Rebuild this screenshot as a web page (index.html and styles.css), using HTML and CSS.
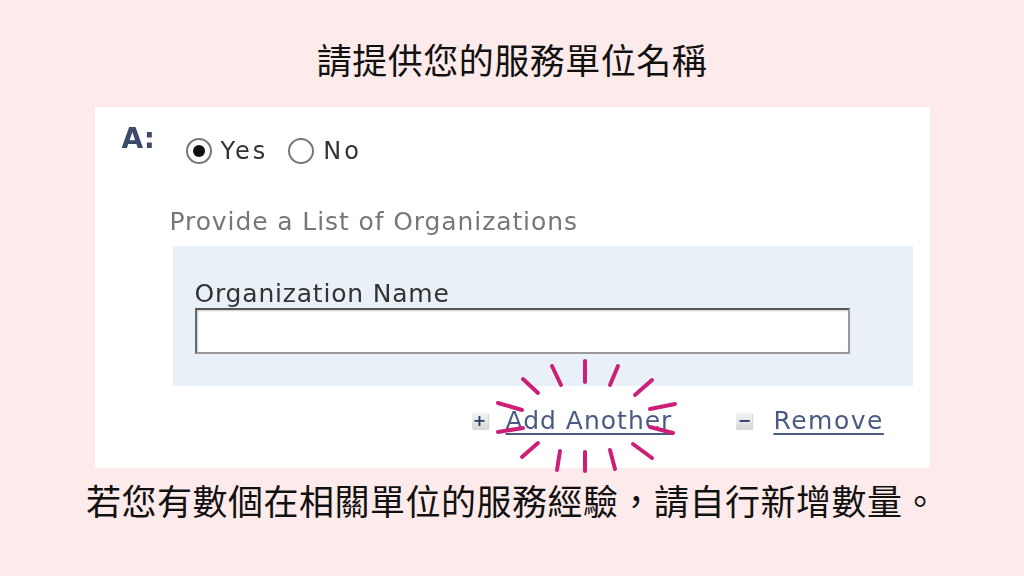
FILE: index.html
```html
<!DOCTYPE html>
<html lang="zh-Hant">
<head>
  <meta charset="UTF-8" />
  <title>請提供您的服務單位名稱</title>
  <link rel="stylesheet" href="styles.css">
</head>
<body>
  <div class="slide">
    <h1 class="title">請提供您的服務單位名稱</h1>

    <div class="panel">
      <div class="answer-row">
        <span class="answer-label">A:</span>
        <label class="radio"><span class="dot checked"></span>Yes</label>
        <label class="radio"><span class="dot"></span>No</label>
      </div>

      <div class="list-label">Provide a List of Organizations</div>

      <div class="org-box">
        <div class="field-label">Organization Name</div>
        <div class="field-input"></div>
      </div>

      <div class="actions">
        <a class="action add"><span class="icon">+</span><span class="link">Add Another</span></a>
        <a class="action remove"><span class="icon">−</span><span class="link">Remove</span></a>
      </div>
    </div>

    <p class="caption">若您有數個在相關單位的服務經驗，請自行新增數量。</p>

    <svg class="burst" width="1024" height="576" viewBox="0 0 1024 576">
      <g stroke="#cc1f78" stroke-width="4" stroke-linecap="round" fill="none">
        <line x1="585" y1="361" x2="585" y2="382" />
        <line x1="552" y1="366" x2="561" y2="385" />
        <line x1="618" y1="366" x2="610" y2="385" />
        <line x1="523" y1="379" x2="538" y2="393" />
        <line x1="652" y1="380" x2="635" y2="395" />
        <line x1="498" y1="403" x2="522" y2="410" />
        <line x1="675" y1="404" x2="650" y2="409" />
        <line x1="498" y1="432" x2="523" y2="428" />
        <line x1="673" y1="433" x2="650" y2="427" />
        <line x1="522" y1="457" x2="538" y2="443" />
        <line x1="652" y1="458" x2="633" y2="444" />
        <line x1="557" y1="470" x2="560" y2="451" />
        <line x1="585" y1="471" x2="585" y2="452" />
        <line x1="615" y1="469" x2="610" y2="450" />
      </g>
    </svg>
  </div>
</body>
</html>
```

FILE: styles.css
```css
* { box-sizing: border-box; margin: 0; padding: 0; }
body {
  background: #fdeaea;
  font-family: "Noto Sans CJK TC", "Noto Sans", sans-serif;
  color: #111;
}

.slide {
  position: relative;
  width: 1024px;
  height: 576px;
  display: flex;
  flex-direction: column;
  align-items: center;
}

.title {
  height: 107px;
  display: flex;
  align-items: center;
  font-size: 35px;
  font-weight: 400;
  letter-spacing: 0.5px;
  padding-top: 10px;
}

.panel {
  width: 835px;
  height: 361px;
  background: #fff;
  padding: 16px 17px 0 27px;
  font-family: "DejaVu Sans", Verdana, sans-serif;
  color: #333;
  filter: blur(0.5px);
}

.answer-row {
  display: flex;
  align-items: center;
  height: 48px;
}
.answer-label {
  font-size: 28px;
  font-weight: bold;
  color: #3b4a6b;
  width: 64px;
  align-self: flex-start;
  line-height: 32px;
}
.radio {
  display: flex;
  align-items: center;
  font-size: 24px;
  letter-spacing: 3px;
  margin-right: 20px;
  padding-top: 8px;
}
.dot {
  width: 26px;
  height: 26px;
  border-radius: 50%;
  border: 2px solid #777;
  background: #fff;
  margin-right: 9px;
  position: relative;
}
.dot.checked::after {
  content: "";
  position: absolute;
  left: 5px;
  top: 5px;
  width: 12px;
  height: 12px;
  border-radius: 50%;
  background: #111;
}

.list-label {
  font-size: 25px;
  letter-spacing: 0.9px;
  color: #777;
  margin: 36px 0 0 48px;
  line-height: 30px;
}

.org-box {
  background: #eaf0f7;
  margin: 9px 0 0 51px;
  height: 140px;
  padding: 34px 0 0 22px;
}
.field-label {
  font-size: 25px;
  letter-spacing: 0.8px;
  color: #333;
  line-height: 28px;
}
.field-input {
  width: 655px;
  height: 46px;
  background: #fff;
  border: 2px solid #999;
  border-top-color: #555;
  border-left-color: #666;
  box-shadow: inset 1px 1px 2px rgba(0, 0, 0, 0.2);
}

.actions {
  display: flex;
  padding-left: 350px;
  margin-top: 20px;
}
.action {
  display: flex;
  align-items: center;
  font-size: 25px;
  letter-spacing: 1px;
  color: #4b5a82;
}
.action.remove { margin-left: 64px; }
.remove .link { letter-spacing: 1.5px; }
.icon {
  width: 16px;
  height: 16px;
  background: linear-gradient(#f4f4f4, #d8d8d8);
  color: #2c3c6a;
  font-weight: bold;
  font-size: 16px;
  letter-spacing: 0;
  line-height: 16px;
  text-align: center;
  margin-right: 18px;
  box-shadow: 1px 1px 1px rgba(0, 0, 0, 0.15);
}
.remove .icon { margin-right: 21px; }
.link {
  text-decoration: underline;
  text-decoration-thickness: 2px;
  text-underline-offset: 4px;
}

.caption {
  font-size: 35px;
  line-height: 48px;
  margin-top: 8px;
  letter-spacing: 0.5px;
}

.burst {
  position: absolute;
  left: 0;
  top: 0;
}
```
